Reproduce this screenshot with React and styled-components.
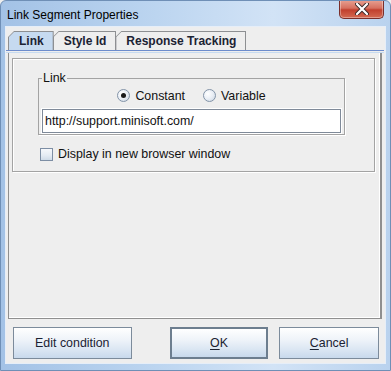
import React from "react";
import styled, { createGlobalStyle } from "styled-components";

const Global = createGlobalStyle`
  html, body { margin: 0; padding: 0; background: #eeeeee; }
  body { font-family: "Liberation Sans", Arial, sans-serif; font-size: 12.4px; }
`;

const Window = styled.div`
  width: 391px;
  height: 371px;
  box-sizing: border-box;
  display: flex;
  flex-direction: column;
  background: linear-gradient(to right, #a3c2e6 0%, #bcd5f0 40%, #d2e3f6 70%, #b9d2ee 100%);
  border: 1px solid #6f8fb6;
  border-radius: 6px 6px 0 0;
  overflow: hidden;
`;

const TitleBar = styled.div`
  height: 26px;
  flex: none;
  display: flex;
  align-items: center;
  justify-content: space-between;
  padding-left: 6px;
  position: relative;
`;

const Title = styled.span`
  font-family: "Liberation Sans", Arial, sans-serif;
  font-size: 12px;
  color: #000;
  margin-top: 1px;
`;

const CloseButton = styled.div`
  position: absolute;
  top: -1px;
  right: 6px;
  width: 45px;
  height: 19px;
  box-sizing: border-box;
  border: 1px solid #7a2e2a;
  border-top: none;
  border-radius: 0 0 5px 5px;
  background: linear-gradient(to bottom, #e8a293 0%, #d6705f 45%, #c1402e 55%, #d46a52 100%);
  display: flex;
  align-items: center;
  justify-content: center;
  box-shadow: inset 0 0 0 1px rgba(255, 255, 255, 0.35);
`;

const Body = styled.div`
  flex: 1;
  margin: 0 5px;
  background: #eeeeee;
  display: flex;
  flex-direction: column;
  box-shadow: 0 0 0 1px #e6eef8;
`;

const TabRow = styled.div`
  display: flex;
  padding: 4px 0 0 2px;
  height: 19px;
`;

const Tab = styled.div`
  position: relative;
  height: 19px;
  padding: 0 10px 0 11px;
  display: flex;
  align-items: center;
  font-weight: bold;
  font-size: 12px;
  color: #1b2233;
  background: #8d8f92;
  clip-path: polygon(0 6px, 6px 0, 100% 0, 100% 100%, 0 100%);
  margin-right: ${(p) => (p.$last ? "0" : "-1px")};
  &::before {
    content: "";
    position: absolute;
    left: 1px;
    top: 1px;
    right: 1px;
    bottom: 0;
    background: ${(p) => (p.$active ? "#c6daf0" : "#eeeeee")};
    clip-path: polygon(0 5px, 5px 0, 100% 0, 100% 100%, 0 100%);
  }
  span {
    position: relative;
  }
`;

const TabLine = styled.div`
  height: 1px;
  border-top: 1px solid #6d8ccc;
  border-bottom: 1px solid #c6daf0;
  margin-right: 1px;
`;

const TabPanel = styled.div`
  margin: 0 3px 0 2px;
  height: 266px;
  box-sizing: border-box;
  border: 1px solid #8f8f8f;
  border-top: none;
  border-right: 2px solid #8f8f8f;
  padding: 5px 3px 0 3px;
  box-shadow: inset -1px 0 0 #ffffff, inset 0 -1px 0 #ffffff;
`;

const InnerPanel = styled.div`
  height: 114px;
  box-sizing: border-box;
  border: 1px solid #a3a3a3;
  box-shadow: 1px 1px 0 #ffffff, inset 1px 1px 0 #ffffff;
  margin-right: 2px;
  padding: 13px 0 0 25px;
`;

const GroupBox = styled.fieldset`
  margin: 0;
  width: 307px;
  height: 63px;
  box-sizing: border-box;
  border: 1px solid #a3a3a3;
  box-shadow: 1px 1px 0 #ffffff;
  padding: 0 3px 0 3px;
  legend {
    padding: 0 1px;
    margin-left: 0px;
    font-size: 12.4px;
    color: #111;
    line-height: 13px;
  }
`;

const RadioRow = styled.div`
  display: flex;
  justify-content: center;
  align-items: center;
  gap: 18px;
  height: 17px;
  margin-top: 2px;
`;

const RadioItem = styled.label`
  display: flex;
  align-items: center;
  gap: 5px;
  font-size: 12.4px;
  color: #111;
`;

const RadioCircle = styled.span`
  width: 13px;
  height: 13px;
  box-sizing: border-box;
  border-radius: 50%;
  border: 1px solid #8394a8;
  background: radial-gradient(circle at 35% 35%, #ffffff 0%, #e9eef5 50%, #c8d3e0 100%);
  display: flex;
  align-items: center;
  justify-content: center;
  &::after {
    content: "";
    width: 5px;
    height: 5px;
    border-radius: 50%;
    background: ${(p) => (p.$checked ? "#1a1a1a" : "transparent")};
  }
`;

const TextField = styled.div`
  margin-top: 5px;
  height: 24px;
  box-sizing: border-box;
  border: 1px solid #7f8a99;
  box-shadow: 0 0 0 1px #ffffff;
  background: #ffffff;
  display: flex;
  align-items: center;
  padding-left: 2px;
  font-size: 12.4px;
  color: #111;
`;

const CheckRow = styled.label`
  display: flex;
  align-items: center;
  gap: 5px;
  margin-top: 12px;
  margin-left: 2px;
  font-size: 12.4px;
  color: #111;
`;

const CheckBox = styled.span`
  width: 13px;
  height: 13px;
  box-sizing: border-box;
  border: 1px solid #7d8ea4;
  background: linear-gradient(to bottom, #f6f8fb 0%, #e4ebf3 60%, #cfdbe8 100%);
`;

const ButtonRow = styled.div`
  display: flex;
  align-items: center;
  padding: 8px 6px 0 7px;
`;

const Button = styled.div`
  width: ${(p) => p.$w}px;
  height: 32px;
  box-sizing: border-box;
  border: ${(p) => (p.$default ? "2px solid #6d7e8f" : "1px solid #7c8b9b")};
  background: linear-gradient(to bottom, #ffffff 0%, #eef3f9 40%, #d9e5f2 75%, #c8d9ec 100%);
  display: flex;
  align-items: center;
  justify-content: center;
  font-size: 12.4px;
  color: #1b2233;
  margin-left: ${(p) => p.$ml || 0}px;
  u {
    text-decoration: underline;
    text-underline-offset: 2px;
  }
`;

const BottomFrame = styled.div`
  height: 7px;
  flex: none;
`;

export default function App() {
  return (
    <>
      <Global />
      <Window>
        <TitleBar>
          <Title>Link Segment Properties</Title>
          <CloseButton>
            <svg width="14" height="12" viewBox="0 0 14 12">
              <path
                d="M2 1 L12 11 M12 1 L2 11"
                stroke="#3a2a2a"
                strokeWidth="4"
                strokeLinecap="round"
              />
              <path
                d="M2 1 L12 11 M12 1 L2 11"
                stroke="#ffffff"
                strokeWidth="2.2"
                strokeLinecap="round"
              />
            </svg>
          </CloseButton>
        </TitleBar>
        <Body>
          <TabRow>
            <Tab $active>
              <span>Link</span>
            </Tab>
            <Tab>
              <span>Style Id</span>
            </Tab>
            <Tab $last>
              <span>Response Tracking</span>
            </Tab>
          </TabRow>
          <TabLine />
          <TabPanel>
            <InnerPanel>
              <GroupBox>
                <legend>Link</legend>
                <RadioRow>
                  <RadioItem>
                    <RadioCircle $checked />
                    Constant
                  </RadioItem>
                  <RadioItem>
                    <RadioCircle />
                    Variable
                  </RadioItem>
                </RadioRow>
                <TextField>http://support.minisoft.com/</TextField>
              </GroupBox>
              <CheckRow>
                <CheckBox />
                Display in new browser window
              </CheckRow>
            </InnerPanel>
          </TabPanel>
          <ButtonRow>
            <Button $w={119}>Edit condition</Button>
            <Button $w={99} $ml={38} $default>
              <span>
                <u>O</u>K
              </span>
            </Button>
            <Button $w={100} $ml={11}>
              <span>
                <u>C</u>ancel
              </span>
            </Button>
          </ButtonRow>
        </Body>
        <BottomFrame />
      </Window>
    </>
  );
}
